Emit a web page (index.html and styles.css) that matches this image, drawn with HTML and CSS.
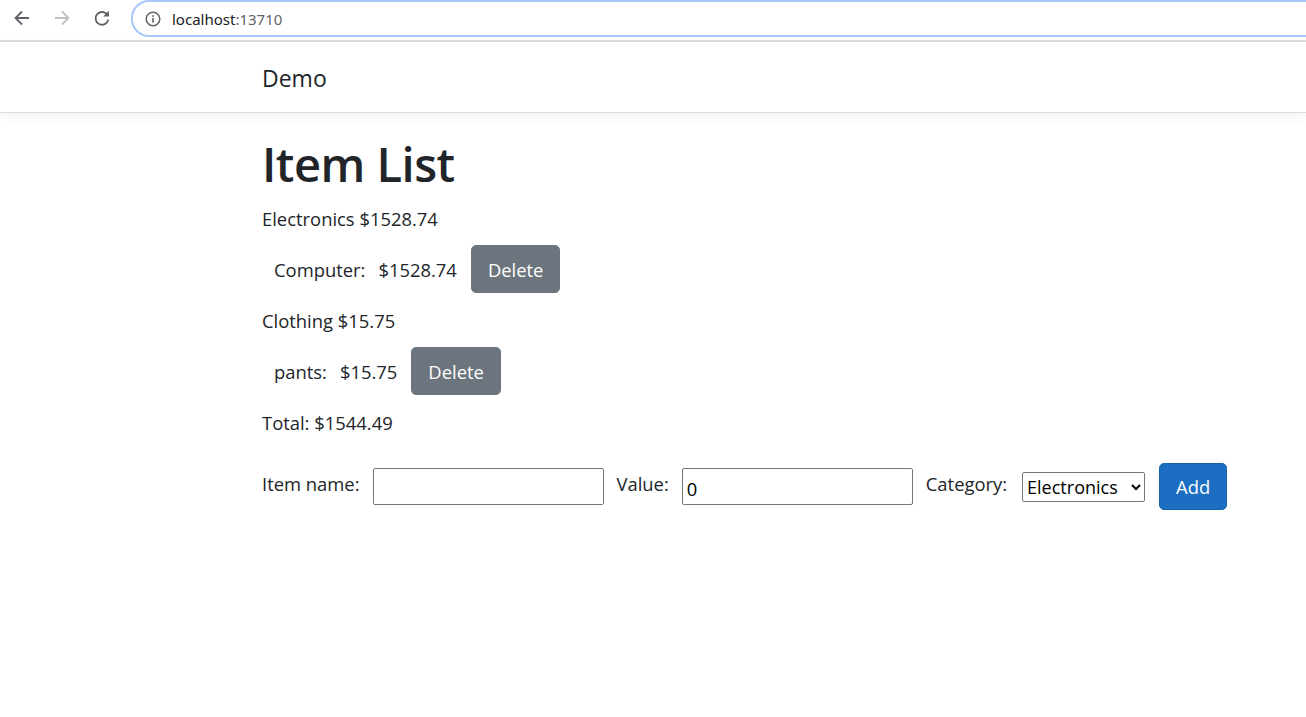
FILE: index.html
```html
<!DOCTYPE html>
<html lang="en">
<head>
<meta charset="utf-8">
<title>Demo</title>
<link rel="stylesheet" href="styles.css">
</head>
<body>
<div class="chrome">
  <div class="nav-icons">
    <svg class="ic" width="20" height="20" viewBox="0 0 20 20"><path d="M17 10H4M10 3.5L3.5 10L10 16.5" fill="none" stroke="#5f6368" stroke-width="1.8"/></svg>
    <svg class="ic" width="20" height="20" viewBox="0 0 20 20"><path d="M3 10H16M10 3.5L16.5 10L10 16.5" fill="none" stroke="#bdc1c6" stroke-width="1.8"/></svg>
    <svg class="ic" width="20" height="20" viewBox="0 0 20 20"><path d="M15.6 7.2A6.4 6.4 0 1 0 16.3 11.6" fill="none" stroke="#5f6368" stroke-width="1.9"/><path d="M17 2.8V8.6H11.2Z" fill="#5f6368"/></svg>
  </div>
  <div class="omnibox">
    <svg class="info" width="16" height="16" viewBox="0 0 16 16"><circle cx="8" cy="8" r="6.8" fill="none" stroke="#5f6368" stroke-width="1.5"/><rect x="7.2" y="7" width="1.6" height="4.6" fill="#5f6368"/><rect x="7.2" y="4.2" width="1.6" height="1.6" fill="#5f6368"/></svg>
    <span class="host">localhost</span><span class="port">:13710</span>
  </div>
</div>
<header class="navbar">
  <div class="container"><span class="brand">Demo</span></div>
</header>
<main class="container content">
  <h1 class="title">Item List</h1>
  <p class="cat">Electronics $1528.74</p>
  <div class="item">
    <span class="item-name">Computer:</span>
    <span class="item-value">$1528.74</span>
    <button class="btn btn-secondary">Delete</button>
  </div>
  <p class="cat">Clothing $15.75</p>
  <div class="item">
    <span class="item-name">pants:</span>
    <span class="item-value">$15.75</span>
    <button class="btn btn-secondary">Delete</button>
  </div>
  <p class="cat">Total: $1544.49</p>
  <form class="add-form">
    <label class="lbl">Item name:</label>
    <input class="field" type="text" value="">
    <label class="lbl">Value:</label>
    <input class="field" type="text" value="0">
    <label class="lbl">Category:</label>
    <select class="sel"><option>Electronics</option><option>Clothing</option></select>
    <button type="button" class="btn btn-primary">Add</button>
  </form>
</main>
</body>
</html>
```
FILE: styles.css
```css
html, body {
  margin: 0;
  padding: 0;
  background: #fff;
}
body {
  font-family: "Open Sans", "Noto Sans", sans-serif;
  font-size: 18.4px;
  color: #212529;
}
.chrome {
  height: 40px;
  border-bottom: 2px solid #dadce0;
  display: flex;
  align-items: flex-start;
  background: #fff;
}
.nav-icons {
  display: flex;
  gap: 20px;
  padding: 8px 0 0 12px;
  width: 119px;
}
.omnibox {
  flex: 1;
  height: 33px;
  margin-top: 0;
  border: 2px solid #a8c7fa;
  border-right: none;
  border-radius: 18px 0 0 18px;
  display: flex;
  align-items: center;
  padding-left: 12px;
  font-family: "Noto Sans", "Open Sans", sans-serif;
  font-size: 15px;
}
.info { margin-right: 11px; }
.host { color: #202124; }
.port { color: #5f6368; }
.navbar {
  height: 70px;
  border-bottom: 1px solid #dcdcdc;
  box-shadow: 0 4px 12px rgba(0, 0, 0, 0.05);
  display: flex;
  align-items: center;
}
.container {
  margin-left: 262px;
}
.brand {
  font-size: 23px;
  color: #212529;
  position: relative;
  top: 1px;
}
.content {
  padding-top: 21px;
}
.title {
  font-size: 47px;
  font-weight: 600;
  line-height: 60px;
  margin: 0 0 11px 0;
  letter-spacing: -0.5px;
}
.cat {
  margin: 0;
  line-height: 27px;
}
.item {
  display: flex;
  align-items: center;
  height: 48px;
  margin: 13px 0 14px 12px;
}
.item-name { margin-right: 13px; }
.item-value { margin-right: 14px; }
.btn {
  font-family: inherit;
  font-size: 18.4px;
  border-radius: 5px;
  border: 1px solid transparent;
  color: #fff;
  cursor: pointer;
}
.btn-secondary {
  background: #6c757d;
  border-color: #6c757d;
  height: 48px;
  padding: 0 16px;
}
.btn-primary {
  background: #1b6ec2;
  border-color: #1861ac;
  height: 47px;
  padding: 0 16px;
}
.add-form {
  display: flex;
  align-items: center;
  margin-top: 27px;
}
.lbl {
  margin-right: 13px;
  position: relative;
  top: -3px;
}
.field {
  width: 231px;
  height: 37px;
  box-sizing: border-box;
  border: 1px solid #767676;
  border-radius: 2px;
  font-family: inherit;
  font-size: 18.4px;
  padding: 4px 4px 0;
  margin-right: 13px;
  color: #000;
}
.sel {
  width: 123px;
  height: 30px;
  box-sizing: border-box;
  border: 1px solid #767676;
  border-radius: 2px;
  font-family: inherit;
  font-size: 18px;
  margin-left: 2px;
  margin-right: 14px;
  background: #fff;
  color: #000;
}
```
